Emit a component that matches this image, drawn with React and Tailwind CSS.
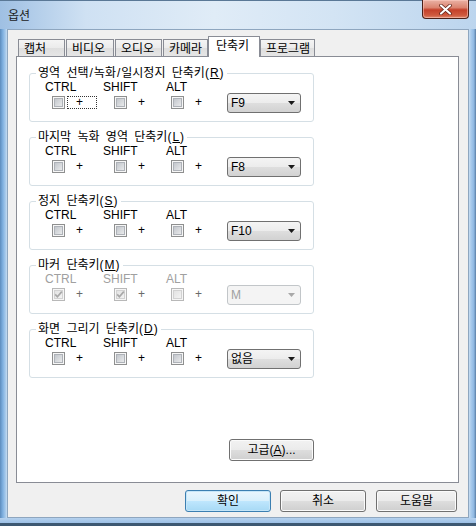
import React from "react";

const FONT = "font-['Liberation_Sans','Noto_Sans_CJK_KR',sans-serif]";

// win7 style check box, 13x13
const CheckBox = ({ checked, disabled }) => (
  <svg width="13" height="13" viewBox="0 0 13 13" className="block shrink-0">
    <defs>
      <linearGradient id={disabled ? "cbd" : "cbn"} x1="0" y1="0" x2="1" y2="1">
        <stop offset="0" stopColor={disabled ? "#e2e2e2" : "#c0c4ca"} />
        <stop offset="1" stopColor={disabled ? "#f4f4f4" : "#ebeced"} />
      </linearGradient>
    </defs>
    <rect x="0.5" y="0.5" width="12" height="12" fill="#f6f6f6" stroke={disabled ? "#b8b8b8" : "#8e8f8f"} />
    <rect x="2.5" y="2.5" width="8" height="8" fill={`url(#${disabled ? "cbd" : "cbn"})`} stroke={disabled ? "#d2d2d2" : "#aeb2b8"} />
    {checked && (
      <path d="M3.2 6.4 L5.4 8.8 L9.8 3.6" fill="none" stroke={disabled ? "#a8a8a8" : "#3c3c3c"} strokeWidth="1.7" />
    )}
  </svg>
);

const Combo = ({ value, disabled }) => (
  <div
    className={`mt-[13px] w-[74px] h-[20px] rounded-[3px] border flex items-center justify-between pl-[3px] pr-[5px] ${
      disabled
        ? "border-[#c2c6c9] bg-[#f4f4f4] text-[#a0a0a0]"
        : "border-[#707070] bg-[linear-gradient(to_bottom,#f4f4f4_0%,#ececec_50%,#dedede_51%,#d2d2d2_100%)] text-black"
    }`}
  >
    <span className="text-[12px] leading-[14px]">{value}</span>
    <svg width="7" height="4" viewBox="0 0 7 4" className="block">
      <path d="M0 0 H7 L3.5 4 Z" fill={disabled ? "#a8a8a8" : "#1a1a1a"} />
    </svg>
  </div>
);

const KeyUnit = ({ label, width, boxMl, checked, disabled, focused }) => (
  <div className="flex flex-col" style={{ width }}>
    <span className={`text-[12px] leading-[14px] whitespace-nowrap ${disabled ? "text-[#a0a0a0]" : "text-black"}`}>
      {label}
    </span>
    <div className="flex items-center mt-[2px]" style={{ marginLeft: boxMl }}>
      <CheckBox checked={checked} disabled={disabled} />
      <span
        className={`ml-[2px] w-[30px] h-[13px] pl-[8px] text-[12px] leading-[11px] border border-dotted ${
          focused ? "border-[#333]" : "border-transparent"
        } ${disabled ? "text-[#6a6a6a]" : "text-black"}`}
      >
        +
      </span>
    </div>
  </div>
);

const HotkeyGroup = ({ title, accel, value, disabled, checks = [false, false, false], focused, first }) => {
  const parts = title.split("/");
  return (
    <fieldset className={`w-[285px] border border-[#d5dfe5] rounded-[3px] ${first ? "" : "mt-[8px]"}`}>
      <legend className="ml-[6px] px-[2px] text-[12px] leading-[14px] text-black [word-spacing:3px]">
        {parts.map((p, i) => (
          <React.Fragment key={i}>
            {i > 0 && <span className="px-[1px]">/</span>}
            {p}
          </React.Fragment>
        ))}
        <span className="tracking-[1px]">
          (<span className="underline">{accel}</span>)
        </span>
      </legend>
      <div className="h-[41px] pl-[15px] flex items-start">
        <KeyUnit label="CTRL" width={58} boxMl={7} checked={checks[0]} disabled={disabled} focused={focused} />
        <KeyUnit label="SHIFT" width={63} boxMl={11} checked={checks[1]} disabled={disabled} />
        <KeyUnit label="ALT" width={61} boxMl={5} checked={checks[2]} disabled={disabled} />
        <Combo value={value} disabled={disabled} />
      </div>
    </fieldset>
  );
};

const tabs = [
  { label: "캡처", w: 47, ml: 1 },
  { label: "비디오", w: 48, ml: 1 },
  { label: "오디오", w: 47, ml: 1 },
  { label: "카메라", w: 45, ml: 1 },
  { label: "단축키", w: 52, ml: 0, active: true },
  { label: "프로그램", w: 55, ml: 0 },
];

const Button = ({ children, w, isDefault, className = "" }) => (
  <div
    className={`h-[22px] rounded-[3px] border flex items-center justify-center text-[12px] leading-[14px] text-black ${
      isDefault
        ? "border-[#3c7fb1] bg-[linear-gradient(to_bottom,#eaf6fd_0%,#d9f0fc_48%,#bee6fd_52%,#a7d9f5_100%)] shadow-[inset_0_0_0_1px_#c6e6f8]"
        : "border-[#707070] bg-[linear-gradient(to_bottom,#f2f2f2_0%,#ebebeb_48%,#dddddd_52%,#cfcfcf_100%)] shadow-[inset_0_0_0_1px_#fbfbfb]"
    } ${className}`}
    style={{ width: w }}
  >
    {children}
  </div>
);

export default function App() {
  return (
    <div className={`w-[476px] h-[526px] overflow-hidden flex flex-col bg-[linear-gradient(to_bottom,#b9d3ee,#a9c8e8)] ${FONT}`}>
      {/* title bar */}
      <div className="h-[29px] flex items-start bg-[linear-gradient(to_right,#9fc0e3_0%,#cfe1f3_18%,#e0ecf7_45%,#d3e4f4_70%,#bcd5ee_100%)] border-t border-[#5a7896]">
        <span className="ml-[8px] mt-[8px] text-[12px] leading-[14px] text-[#1b1b1b]">옵션</span>
        <div className="ml-auto mr-[7px] w-[47px] h-[19px] -mt-px rounded-b-[4px] border border-t-0 border-[#4a2018] bg-[linear-gradient(to_bottom,#eab2a5_0%,#db8470_42%,#c4402a_55%,#cf5a3f_85%,#e08a70_100%)] flex items-center justify-center shadow-[inset_0_0_0_1px_rgba(255,210,200,0.5)]">
          <svg width="13" height="11" viewBox="0 0 13 11">
            <path d="M2 1.5 L11 9.5 M11 1.5 L2 9.5" stroke="#5a1e14" strokeWidth="3.6" strokeLinecap="round" />
            <path d="M2 1.5 L11 9.5 M11 1.5 L2 9.5" stroke="#ffffff" strokeWidth="2.2" strokeLinecap="round" />
          </svg>
        </div>
      </div>

      <div className="flex h-[489px]">
        <div className="w-[7px] bg-[linear-gradient(to_right,#5d8cbd,#7fb0e0_40%,#a9cbec_80%,#c6dcf1)]" />
        {/* client area */}
        <div className="w-[462px] bg-[#f0f0f0] border border-[#8ea6bf] pl-[8px] pt-[6px] flex flex-col">
          {/* tab strip */}
          <div className="flex items-end h-[20px] pl-[1px]">
            {tabs.map((t) =>
              t.active ? (
                <div
                  key={t.label}
                  className="relative z-10 -mb-px h-[21px] bg-white border border-b-0 border-[#898c95] pl-[7px] pt-[2px] text-[12px] leading-[14px] text-black"
                  style={{ width: t.w, marginLeft: t.ml }}
                >
                  {t.label}
                </div>
              ) : (
                <div
                  key={t.label}
                  className="h-[17px] bg-[linear-gradient(to_bottom,#f4f4f4_0%,#ebebeb_50%,#dedede_51%,#e6e6e6_100%)] border border-b-0 border-[#898c95] pl-[5px] pt-[2px] text-[12px] leading-[14px] text-black"
                  style={{ width: t.w, marginLeft: t.ml }}
                >
                  {t.label}
                </div>
              )
            )}
          </div>

          {/* tab page */}
          <div className="w-[443px] h-[427px] bg-white border border-[#898c95] pt-[9px] pl-[12px] flex flex-col">
            <HotkeyGroup first title="영역 선택/녹화/일시정지 단축키" accel="R" value="F9" focused />
            <HotkeyGroup title="마지막 녹화 영역 단축키" accel="L" value="F8" />
            <HotkeyGroup title="정지 단축키" accel="S" value="F10" />
            <HotkeyGroup title="마커 단축키" accel="M" value="M" disabled checks={[true, true, false]} />
            <HotkeyGroup title="화면 그리기 단축키" accel="D" value="없음" />
            <div className="w-[285px] flex justify-end mt-[61px]">
              <Button w={85} className="h-[19px]">
                고급(<span className="underline">A</span>)...
              </Button>
            </div>
          </div>

          {/* dialog buttons */}
          <div className="flex mt-[7px] ml-[169px]">
            <Button w={86} isDefault>확인</Button>
            <Button w={86} className="ml-[9px]">취소</Button>
            <Button w={81} className="ml-[10px]">도움말</Button>
          </div>
        </div>
        <div className="w-[7px] bg-[linear-gradient(to_right,#c6dcf1,#a9cbec_30%,#8fb8e2_70%,#5a7ea4)]" />
      </div>

      <div className="h-[8px] flex flex-col">
        <div className="h-[5px] bg-[linear-gradient(to_bottom,#b5d1ee,#9cc0e6)]" />
        <div className="h-[3px] bg-[#3d5872]" />
      </div>
    </div>
  );
}
